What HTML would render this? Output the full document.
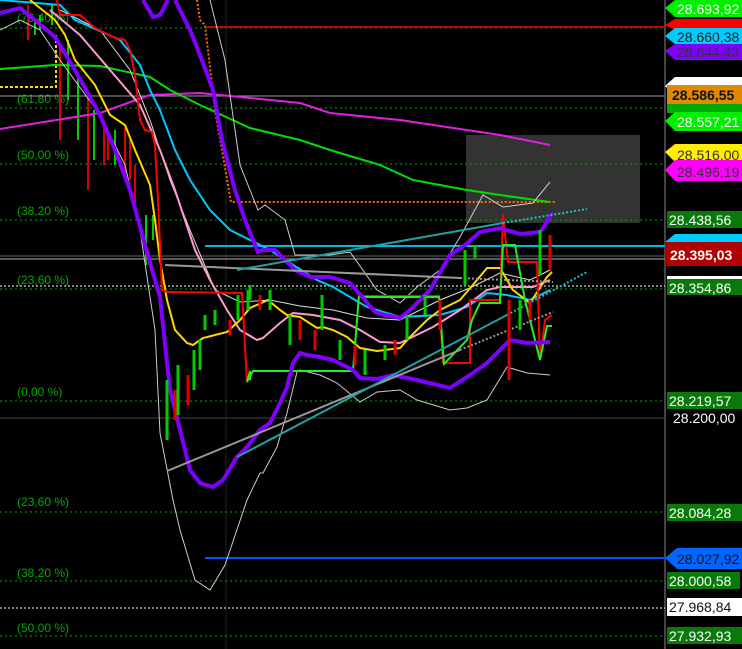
<!DOCTYPE html>
<html><head><meta charset="utf-8"><style>
html,body{margin:0;padding:0;background:#000;width:742px;height:649px;overflow:hidden}
svg{display:block}
text{font-family:"Liberation Sans",sans-serif}
.f{font-size:12px;fill:#0a0}
.l{font-size:14px}
</style></head><body>
<svg width="742" height="649" viewBox="0 0 742 649">
<rect width="742" height="649" fill="#000"/>
<rect x="466" y="135" width="174" height="88" fill="#333"/>
<line x1="226" y1="0" x2="226" y2="649" stroke="#222"/>
<line x1="665" y1="0" x2="665" y2="649" stroke="#444" stroke-width="2"/>
<g stroke="#0a0" stroke-dasharray="2,3" stroke-width="1">
<line x1="0" y1="28" x2="665" y2="28"/><line x1="0" y1="108" x2="665" y2="108"/>
<line x1="0" y1="164" x2="665" y2="164"/><line x1="0" y1="220" x2="665" y2="220"/>
<line x1="0" y1="289" x2="665" y2="289"/><line x1="0" y1="401" x2="665" y2="401"/>
<line x1="0" y1="512" x2="665" y2="512"/><line x1="0" y1="581" x2="665" y2="581"/>
<line x1="0" y1="636" x2="665" y2="636"/>
</g>
<g class="f">
<text x="17" y="22">(76,40 %)</text><text x="17" y="103">(61,80 %)</text>
<text x="17" y="159">(50,00 %)</text><text x="17" y="215">(38,20 %)</text>
<text x="17" y="284">(23,60 %)</text><text x="17" y="396">(0,00 %)</text>
<text x="17" y="506">(23,60 %)</text><text x="17" y="577">(38,20 %)</text>
<text x="17" y="632">(50,00 %)</text>
</g>
<line x1="0" y1="96" x2="665" y2="96" stroke="#999"/>
<line x1="0" y1="256" x2="665" y2="256" stroke="#666"/>
<line x1="0" y1="259" x2="665" y2="259" stroke="#aaa"/>
<line x1="0" y1="286" x2="665" y2="286" stroke="#fff" stroke-dasharray="2,2"/>
<line x1="0" y1="608" x2="665" y2="608" stroke="#fff" stroke-dasharray="2,2"/>
<line x1="0" y1="418" x2="665" y2="418" stroke="#444"/>
<line x1="207" y1="27" x2="665" y2="27" stroke="#c00" stroke-width="2"/>
<line x1="205" y1="246" x2="742" y2="246" stroke="#00b8d8" stroke-width="2"/>
<line x1="205" y1="558" x2="665" y2="558" stroke="#0055ff" stroke-width="2"/>
<polyline points="0,87 56,87 56,33" fill="none" stroke="#ffd800" stroke-width="2" stroke-dasharray="3,2"/>
<polyline points="197,0 200,20 205,25 215,110 231,202 555,202" fill="none" stroke="#ff6a00" stroke-width="2" stroke-dasharray="2,2"/>
<g stroke-width="2">
<g stroke="#00cc00">
<line x1="35" y1="22" x2="35" y2="35"/><line x1="40" y1="15" x2="40" y2="30"/><line x1="52" y1="5" x2="52" y2="25"/><line x1="68" y1="40" x2="68" y2="100"/><line x1="78" y1="75" x2="78" y2="140"/><line x1="94" y1="110" x2="94" y2="160"/><line x1="115" y1="130" x2="115" y2="165"/><line x1="146" y1="215" x2="146" y2="265"/><line x1="153" y1="215" x2="153" y2="240"/>
</g>
<g stroke="#dd0000">
<line x1="28" y1="5" x2="28" y2="40"/><line x1="60" y1="45" x2="60" y2="140"/><line x1="88" y1="95" x2="88" y2="190"/><line x1="104" y1="120" x2="104" y2="165"/><line x1="108" y1="130" x2="108" y2="160"/><line x1="125" y1="128" x2="125" y2="175"/><line x1="130" y1="140" x2="130" y2="180"/><line x1="135" y1="165" x2="135" y2="210"/>
</g></g>
<polyline points="0,129 100,113 150,95 200,93 250,98 300,103 330,113 400,120 500,135 550,145" fill="none" stroke="#e020e0" stroke-width="2"/>
<polyline points="0,69 55,65 100,66 150,77 170,90 200,105 250,128 300,140 330,150 380,165 413,180 467,190 500,195 550,202" fill="none" stroke="#00dd00" stroke-width="2"/>
<polyline points="210,0 225,60 235,130 240,165 250,190 258,210 265,205 285,220 295,255 330,255 350,252 377,290 400,303 417,287 440,270 460,237 483,195 503,207 533,203 550,182" fill="none" stroke="#ccc"/>
<polyline points="0,30 20,20 40,30 60,60 100,115 125,165 140,230 155,330 160,433 173,500 180,530 195,580 210,590 225,565 247,500 260,473 263,473 277,447 287,413 297,372 300,370 320,375 337,383 360,402 377,392 400,390 417,400 450,410 467,408 487,400 507,367 527,373 550,375" fill="none" stroke="#ccc"/>
<polyline points="60,10 100,30 130,70 150,120 170,180 190,230 215,290 240,302 270,300 300,306 333,310 367,318 400,320 440,300 470,288 500,273 530,280 550,270" fill="none" stroke="#ddd"/>
<polyline points="0,0 60,5 75,20 120,40 140,65 150,90 160,110 175,150 190,180 210,210 230,230 250,240 270,250 290,263 317,280 333,287 367,307 400,317 440,315 467,307 487,293 507,295 530,300 550,290" fill="none" stroke="#00c8ff" stroke-width="2"/>
<polyline points="50,10 80,35 110,70 140,105 160,150 175,190 195,250 210,280 227,310 240,330 257,340 263,338 280,323 293,313 313,315 340,320 360,330 380,342 400,343 433,327 460,310 487,290 500,287 533,287 550,280" fill="none" stroke="#ff9ad0" stroke-width="2"/>
<polyline points="30,0 55,20 65,35 75,60 95,85 110,115 125,125 135,150 150,185 155,220 160,260 167,300 175,330 187,343 193,345 203,338 227,332 240,320 250,308 268,300 280,310 287,315 300,317 317,328 323,327 333,330 347,337 360,348 377,351 400,348 410,337 427,320 440,310 460,300 477,280 487,268 500,268 513,290 530,303 547,277 552,272" fill="none" stroke="#ffd800" stroke-width="2"/>
<polyline points="57,0 60,15 80,15 95,28 115,38 125,40 130,50 135,75 140,120 145,130 152,132 155,145 158,200 162,290 168,292 242,293 247,382" fill="none" stroke="#ff0000" stroke-width="2"/>
<polyline points="359,296 439,296 443,363 470,363 470,300 500,300 503,215 508,262 537,262 540,360 545,320 552,315" fill="none" stroke="#ff0000" stroke-width="2"/>
<polyline points="250,380 250,371 247,382 253,371 353,371 359,295 359,297 439,297 444,364 467,340 472,320 480,303 500,303 503,245 515,245 525,300 540,360 547,326 552,326" fill="none" stroke="#22ee22" stroke-width="2"/>
<polyline points="143,0 153,17 160,15 168,0" fill="none" stroke="#8000ff" stroke-width="4"/>
<polyline points="175,0 190,30 200,55 213,90 222,140 235,190 245,220 258,252 262,250 275,250 295,270 310,277 330,277 350,283 365,300 375,312 385,315 400,318 410,310 430,290 450,255 465,245 480,232 500,228 520,234 540,232 545,225 552,213" fill="none" stroke="#8000ff" stroke-width="4"/>
<polyline points="0,13 20,8 35,20 55,37 75,70 100,115 115,150 130,190 145,245 155,280 160,297 170,390 180,430 190,470 200,483 213,487 223,480 237,457 247,447 260,430 270,423 280,403 287,387 293,363 300,353 307,355 320,357 333,360 353,370 360,378 377,379 393,375 417,380 450,388 473,373 487,363 510,340 527,343 550,342" fill="none" stroke="#8000ff" stroke-width="4"/>
<line x1="167" y1="471" x2="460" y2="350" stroke="#999" stroke-width="2"/>
<line x1="460" y1="350" x2="553" y2="312" stroke="#999" stroke-width="2" stroke-dasharray="2,2"/>
<line x1="165" y1="265" x2="460" y2="278" stroke="#999" stroke-width="2"/>
<line x1="460" y1="278" x2="553" y2="282" stroke="#999" stroke-width="2" stroke-dasharray="2,2"/>
<line x1="237" y1="457" x2="507" y2="315" stroke="#20a0a0" stroke-width="2"/>
<line x1="507" y1="315" x2="587" y2="272" stroke="#20c0c0" stroke-width="2" stroke-dasharray="2,2"/>
<line x1="237" y1="270" x2="503" y2="223" stroke="#20a0a0" stroke-width="2"/>
<line x1="503" y1="223" x2="587" y2="209" stroke="#20c0c0" stroke-width="2" stroke-dasharray="2,2"/>
<g stroke-width="3">
<g stroke="#00cc00">
<line x1="167" y1="380" x2="167" y2="440"/><line x1="178" y1="365" x2="178" y2="415"/><line x1="194" y1="350" x2="194" y2="390"/><line x1="200" y1="340" x2="200" y2="370"/><line x1="205" y1="315" x2="205" y2="330"/><line x1="215" y1="310" x2="215" y2="325"/><line x1="238" y1="295" x2="238" y2="320"/><line x1="250" y1="285" x2="250" y2="300"/><line x1="248" y1="290" x2="248" y2="310"/><line x1="270" y1="290" x2="270" y2="310"/><line x1="290" y1="315" x2="290" y2="345"/><line x1="322" y1="295" x2="322" y2="330"/><line x1="340" y1="340" x2="340" y2="360"/><line x1="365" y1="350" x2="365" y2="375"/><line x1="385" y1="345" x2="385" y2="360"/><line x1="407" y1="315" x2="407" y2="340"/><line x1="425" y1="295" x2="425" y2="315"/><line x1="465" y1="250" x2="465" y2="285"/><line x1="475" y1="245" x2="475" y2="258"/><line x1="520" y1="300" x2="520" y2="330"/><line x1="540" y1="230" x2="540" y2="275"/>
</g>
<g stroke="#dd0000">
<line x1="230" y1="320" x2="230" y2="335"/><line x1="260" y1="295" x2="260" y2="310"/><line x1="300" y1="320" x2="300" y2="340"/><line x1="315" y1="330" x2="315" y2="350"/><line x1="355" y1="345" x2="355" y2="365"/><line x1="395" y1="340" x2="395" y2="355"/><line x1="440" y1="300" x2="440" y2="330"/><line x1="509" y1="300" x2="509" y2="380"/><line x1="530" y1="300" x2="530" y2="320"/><line x1="550" y1="235" x2="550" y2="270"/><line x1="175" y1="390" x2="175" y2="420"/><line x1="188" y1="375" x2="188" y2="405"/>
</g></g>
<g class="l">
<polygon points="665,8 675,0 742,0 742,17 675,17" fill="#00ee00"/><text x="677" y="14" fill="#fff">28.693,92</text>
<polygon points="665,25 675,19 742,19 742,30 675,30" fill="#ff0000"/>
<polygon points="665,51 675,44 742,44 742,60 675,60" fill="#8000ff"/><text x="677" y="57" fill="#333">28.644,43</text>
<polygon points="665,36 675,28 742,28 742,44 675,44" fill="#00ccff"/><text x="677" y="42" fill="#222">28.660,38</text>
<polygon points="665,86 675,77 742,77 742,95 675,95" fill="#fff"/>
<rect x="667" y="85" width="75" height="19" fill="#e08a00"/><text x="672" y="100" fill="#111" font-weight="bold">28.586,55</text>
<rect x="667" y="104" width="75" height="9" fill="#0a0"/>
<polygon points="665,121 675,112 742,112 742,131 675,131" fill="#00ee00"/><text x="677" y="127" fill="#fff">28.557,21</text>
<polygon points="665,152 675,144 742,144 742,162 675,162" fill="#ffee00"/><text x="677" y="160" fill="#333">28.516,00</text>
<polygon points="665,170 675,160 742,160 742,181 675,181" fill="#ff00ff"/><text x="677" y="177" fill="#333">28.496,19</text>
<rect x="667" y="211" width="75" height="17" fill="#097a09"/><text x="669" y="225" fill="#fff">28.438,56</text>
<polygon points="665,242 675,234 742,234 742,243 665,243" fill="#00ccff"/>
<rect x="665" y="242" width="77" height="24" fill="#b00000"/><text x="670" y="260" fill="#fff" font-weight="bold">28.395,03</text>
<rect x="667" y="276" width="75" height="3" fill="#fff"/>
<rect x="667" y="279" width="75" height="16" fill="#097a09"/><text x="669" y="293" fill="#fff">28.354,86</text>
<rect x="667" y="392" width="75" height="17" fill="#097a09"/><text x="669" y="406" fill="#fff">28.219,57</text>
<text x="673" y="423" fill="#fff">28.200,00</text>
<rect x="667" y="504" width="75" height="17" fill="#097a09"/><text x="669" y="518" fill="#fff">28.084,28</text>
<polygon points="665,558 677,548 742,548 742,569 677,569" fill="#0066ff"/><text x="677" y="564" fill="#112">28.027,92</text>
<rect x="667" y="572" width="73" height="17" fill="#097a09"/><text x="669" y="586" fill="#fff">28.000,58</text>
<rect x="667" y="598" width="75" height="18" fill="#fff"/><text x="669" y="612" fill="#111">27.968,84</text>
<rect x="667" y="627" width="75" height="17" fill="#097a09"/><text x="669" y="641" fill="#fff">27.932,93</text>
</g>
</svg>
</body></html>
